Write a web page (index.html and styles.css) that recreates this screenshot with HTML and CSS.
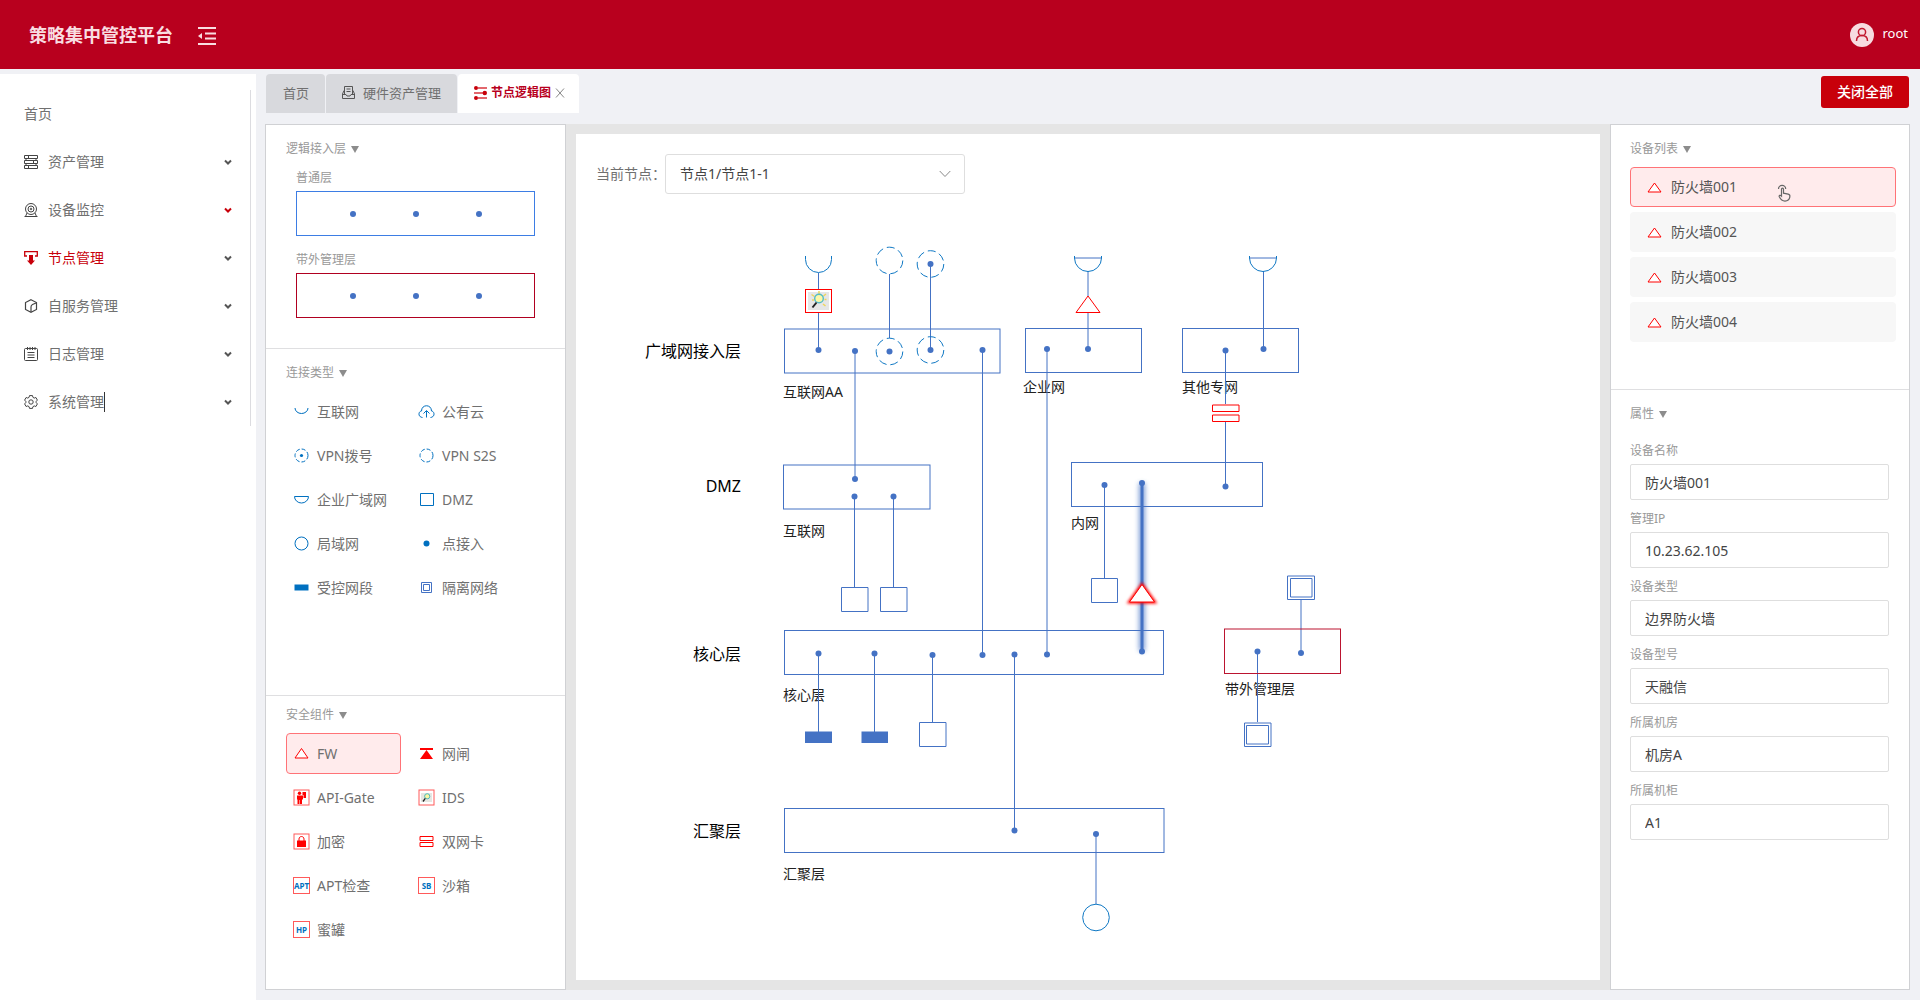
FILE: index.html
```html
<!DOCTYPE html>
<html lang="zh-CN">
<head>
<meta charset="utf-8">
<title>策略集中管控平台</title>
<link rel="stylesheet" href="styles.css">
</head>
<body>
<header class="topbar">
  <h1 class="brand">策略集中管控平台</h1>
  <button class="fold" type="button" aria-label="收起菜单">
    <svg width="20" height="20" viewBox="0 0 20 20" fill="none" stroke="currentColor" stroke-width="2"><path d="M1 2h18M8 7.500h11M8 12.500h11M1 18h18"/><path d="M1 10l4-3v6z" fill="currentColor" stroke="none"/></svg>
  </button>
  <div class="user">
    <svg width="24" height="24" viewBox="0 0 24 24"><circle cx="12" cy="12" r="12" fill="#f7dbe0"/><g fill="none" stroke="#c2182f" stroke-width="1.500"><circle cx="12" cy="9" r="3.600"/><path d="M6.500 18c0-3.500 2.200-5.400 5.500-5.400s5.500 1.900 5.500 5.400"/></g></svg>
    <span>root</span>
  </div>
</header>

<div class="shell">
  <aside class="sidebar">
    <nav class="menu">
      <a class="menu-item" href="#">首页</a>
      <a class="menu-item" href="#">
        <svg class="menu-icon" viewBox="0 0 14 14" fill="none" stroke="currentColor"><path d="M.5.500h13v3H.5zM.5 5.500h13v3H.5zM.5 10.500h13v3H.5zM4.500 .5v3M9.500 5.500v3M4.500 10.500v3M2 3.500v2M12 3.500v2M2 8.500v2M12 8.500v2"/></svg>
        <span>资产管理</span>
        <svg class="chev" viewBox="0 0 8 6"><path d="M1 1.500l3 3 3-3"/></svg>
      </a>
      <a class="menu-item" href="#">
        <svg class="menu-icon" viewBox="0 0 14 14" fill="none" stroke="currentColor"><circle cx="7" cy="6" r="5.500"/><circle cx="7" cy="6" r="3"/><circle cx="7" cy="6" r=".8"/><path d="M3 10L1.500 13.500h11L11 10M.5 13.500h13"/></svg>
        <span>设备监控</span>
        <svg class="chev chev-hot" viewBox="0 0 8 6"><path d="M1 1.500l3 3 3-3"/></svg>
      </a>
      <a class="menu-item active" href="#">
        <svg class="menu-icon" viewBox="0 0 14 14"><path d="M3 5H.7V.7h12.600V5H11" fill="none" stroke="currentColor" stroke-width="1.300"/><path d="M5 4h4v5.500h2L7 14 3 9.500h2z" fill="currentColor"/></svg>
        <span>节点管理</span>
        <svg class="chev" viewBox="0 0 8 6"><path d="M1 1.500l3 3 3-3"/></svg>
      </a>
      <a class="menu-item" href="#">
        <svg class="menu-icon" viewBox="0 0 14 14" fill="none" stroke="currentColor" stroke-width="1.200"><path d="M7 .7l5.500 2.800v7L7 13.300l-5.500-2.800v-7z"/><path d="M12 4L8.500 5.500Q7 6.200 7 8v5"/></svg>
        <span>自服务管理</span>
        <svg class="chev" viewBox="0 0 8 6"><path d="M1 1.500l3 3 3-3"/></svg>
      </a>
      <a class="menu-item" href="#">
        <svg class="menu-icon" viewBox="0 0 14 14" fill="none" stroke="currentColor"><rect x=".5" y="1.500" width="13" height="12" rx="1"/><path d="M3.500 0v3M6 0v3M8.500 0v3M11 0v3M3.500 5.500h7M3.500 8h7M3.500 10.500h7"/></svg>
        <span>日志管理</span>
        <svg class="chev" viewBox="0 0 8 6"><path d="M1 1.500l3 3 3-3"/></svg>
      </a>
      <a class="menu-item" href="#">
        <svg class="menu-icon" viewBox="0 0 14 14" fill="none" stroke="currentColor"><path d="M5.500.6h3l.4 1.700 1.300.8 1.700-.6 1.500 2.600-1.200 1.200v1.400l1.200 1.200-1.500 2.600-1.700-.6-1.300.8-.4 1.700h-3l-.4-1.700-1.300-.8-1.700.6L.6 8.900l1.200-1.200V6.300L.6 5.100l1.500-2.600 1.700.6 1.300-.8z"/><circle cx="7" cy="7" r="2.200"/></svg>
        <span class="typing">系统管理</span>
        <svg class="chev" viewBox="0 0 8 6"><path d="M1 1.500l3 3 3-3"/></svg>
      </a>
    </nav>
  </aside>

  <main class="main">
    <div class="tabbar">
      <div class="tabs">
        <button class="tab" type="button">首页</button>
        <button class="tab tab-icon" type="button">
          <svg width="13" height="13" viewBox="0 0 13 13" fill="none" stroke="#555"><path d="M2.500 8V.5h8V8M4.500 3h4M4.500 5.500h4"/><path d="M2 4.500L.5 8v4.500h12V8L11 4.500M.5 8.500h3.500l1 1.500h3l1-1.500h3.500"/></svg>
          硬件资产管理
        </button>
        <div class="tab tab-current">
          <svg width="13" height="14" viewBox="0 0 13 14"><path d="M4 2h9M0 7h9M4 12h9" stroke="#d9363e" stroke-width="1.400"/><g fill="#c8000a"><circle cx="2" cy="2" r="2"/><circle cx="10.800" cy="7" r="2.200"/><circle cx="2" cy="12" r="2"/></g></svg>
          <span>节点逻辑图</span>
          <button class="tab-close" type="button" aria-label="关闭"><svg width="10" height="12" viewBox="0 0 10 12" stroke="#888" fill="none"><path d="M1 1.500l8 9M9 1.500l-8 9"/></svg></button>
        </div>
      </div>
      <button class="close-all" type="button">关闭全部</button>
    </div>

    <div class="workspace">
      <section class="palette">
        <div class="group group-layers">
          <button class="group-title" type="button">逻辑接入层</button>
          <div class="layer-list">
            <div class="layer-name">普通层</div>
            <div class="layer-box"><i></i><i></i><i></i></div>
            <div class="layer-name">带外管理层</div>
            <div class="layer-box layer-oob"><i></i><i></i><i></i></div>
          </div>
        </div>
        <div class="group group-links">
          <button class="group-title" type="button">连接类型</button>
          <div class="tools">
            <button class="tool" type="button"><svg class="ico" viewBox="0 0 17 17"><path class="ln" d="M2 5a6.500 5.500 0 0 0 13 0"/></svg>互联网</button>
            <button class="tool" type="button"><svg class="ico" viewBox="0 0 17 17"><path class="ln" d="M4.500 14.500C-.3 14 .3 8.300 3.500 8 3.500 1 13.500 1 13.500 8c3.200.3 3.800 6-1 6.500M8.500 14.500V8M5.500 10.500L8.500 7.500l3 3"/></svg>公有云</button>
            <button class="tool" type="button"><svg class="ico" viewBox="0 0 17 17"><circle class="ln dash-s" cx="8.500" cy="8.500" r="6.500"/><circle class="dot" cx="8.500" cy="8.500" r="1.600"/></svg>VPN拨号</button>
            <button class="tool" type="button"><svg class="ico" viewBox="0 0 17 17"><circle class="ln dash-s" cx="8.500" cy="8.500" r="6.500"/></svg>VPN S2S</button>
            <button class="tool" type="button"><svg class="ico" viewBox="0 0 17 17"><path class="ln" d="M1.500 5.500h14a7 6.500 0 0 1-14 0z"/></svg>企业广域网</button>
            <button class="tool" type="button"><svg class="ico" viewBox="0 0 17 17"><path class="ln" d="M2.500 2.500h13v12h-13z"/></svg>DMZ</button>
            <button class="tool" type="button"><svg class="ico" viewBox="0 0 17 17"><circle class="ln" cx="8.500" cy="8.500" r="6.500"/></svg>局域网</button>
            <button class="tool" type="button"><svg class="ico" viewBox="0 0 17 17"><circle class="dot" cx="8.500" cy="8.500" r="3"/></svg>点接入</button>
            <button class="tool" type="button"><svg class="ico" viewBox="0 0 17 17"><path class="dot" d="M1.500 5.500h14v6h-14z"/></svg>受控网段</button>
            <button class="tool" type="button"><svg class="ico" viewBox="0 0 17 17"><path d="M3.500 3.500h10v10h-10zM5.500 5.500h6v6h-6z" fill="none" stroke="#4472c4"/></svg>隔离网络</button>
          </div>
        </div>
        <div class="group group-security">
          <button class="group-title" type="button">安全组件</button>
          <div class="tools">
            <button class="tool picked" type="button"><svg class="ico" viewBox="0 0 17 17"><path class="rd" d="M8.500 3.500l6.500 9.500H2z"/></svg>FW</button>
            <button class="tool" type="button"><svg class="ico" viewBox="0 0 17 17"><path d="M2 3h13v2H2zM8.500 5l6.500 9H2z" fill="#f00"/></svg>网闸</button>
            <button class="tool" type="button"><svg class="ico" viewBox="0 0 17 17"><rect class="frame" x="1" y="1" width="15" height="15"/><g fill="#f00"><circle cx="6.500" cy="4.300" r="1.700"/><path d="M4 6.500h6v4H9V15H7v-4h-.5v4h-2v-4.500H4zM9.500 3h3.500v6h-2.500V6h-1z"/></g></svg>API-Gate</button>
            <button class="tool" type="button"><svg class="ico" viewBox="0 0 17 17"><rect class="frame" x="1" y="1" width="15" height="15"/><path d="M3 4h11v9H3z" fill="#e6e6e2"/><circle cx="9.200" cy="7.300" r="2.600" fill="#fbf6a0" stroke="#4cb8bd"/><path d="M7.300 9.300L5 12.500" stroke="#222" stroke-width="1.300"/></svg>IDS</button>
            <button class="tool" type="button"><svg class="ico" viewBox="0 0 17 17"><rect class="frame" x="1" y="1" width="15" height="15"/><path d="M6 8V6c0-3.300 5-3.300 5 0v2" fill="none" stroke="#f00"/><path d="M4 7.500h9V14H4z" fill="#f00"/></svg>加密</button>
            <button class="tool" type="button"><svg class="ico" viewBox="0 0 17 17"><path class="rd" d="M2 3.500h13v4H2zM2 9.500h13v4H2z"/></svg>双网卡</button>
            <button class="tool" type="button"><span class="badge">APT</span>APT检查</button>
            <button class="tool" type="button"><span class="badge">SB</span>沙箱</button>
            <button class="tool" type="button"><span class="badge">HP</span>蜜罐</button>
          </div>
        </div>
      </section>

      <section class="stage">
        <div class="canvas">
          <div class="picker">
            <label for="node">当前节点：</label>
            <div class="select-wrap">
              <select id="node"><option>节点1/节点1-1</option></select>
              <svg width="12" height="8" viewBox="0 0 12 8"><path d="M.7 1l5.300 5.500L11.300 1" fill="none" stroke="#888"/></svg>
            </div>
          </div>
          <svg class="diagram" viewBox="576 194 1024 786" preserveAspectRatio="xMinYMin meet">
            <defs>
              <filter id="glow-blue" filterUnits="userSpaceOnUse" x="1120" y="470" width="44" height="200"><feGaussianBlur stdDeviation="2.500"/></filter>
              <filter id="glow-red" x="-50%" y="-50%" width="200%" height="200%"><feGaussianBlur stdDeviation="1.500"/></filter>
            </defs>
            <g class="zone-names">
              <text x="741" y="357">广域网接入层</text>
              <text x="741" y="492">DMZ</text>
              <text x="741" y="660">核心层</text>
              <text x="741" y="837">汇聚层</text>
            </g>
            <g class="captions">
              <text x="783" y="397">互联网AA</text>
              <text x="1023" y="392">企业网</text>
              <text x="1182" y="392">其他专网</text>
              <text x="783" y="536">互联网</text>
              <text x="1071" y="528">内网</text>
              <text x="783" y="700">核心层</text>
              <text x="1225" y="694">带外管理层</text>
              <text x="783" y="879">汇聚层</text>
            </g>
            <g class="shape">
              <rect x="784.500" y="329" width="215.500" height="44"/>
              <rect x="1025.500" y="328.500" width="116" height="44"/>
              <rect x="1182.500" y="328.500" width="116" height="44"/>
              <rect x="783.500" y="465" width="146.500" height="44"/>
              <rect x="1071.500" y="462.500" width="191" height="44"/>
              <rect x="784.500" y="630.500" width="379" height="44"/>
              <rect x="784.500" y="808.500" width="379.500" height="44"/>
              <path d="M818.500 273v16M818.500 313v37M889.500 274v64M930.500 264v86M855 351v128M982.500 350v305M1047 349v305M1088 271v25M1088 313v36M1263.500 271v78M1225.500 350v54M1225.500 422v64M854.500 496v91M893.500 496v91M1104.500 485v93M818.500 653v79M874.500 653v79M932.500 655v67M1014.500 654v176M1301 600v53M1257.500 651v71M1096 834v70"/>
              <path d="M841.500 587.500h26.500v24h-26.500zM880.500 587.500h26.500v24h-26.500zM1091.500 578.500h26v24h-26zM919.500 722.500h26.500v24h-26.500z"/>
              <path d="M1287.500 576h27v23.500h-27zM1290.500 578.500h21.500v18.500h-21.500zM1244.500 723h26.500v23.500h-26.500zM1246.500 725.500h22v18.500h-22z"/>
              <path d="M1074.500 258h27M1249.500 258h27"/>
            </g>
            <rect x="1224.500" y="629" width="116" height="44.500" fill="none" stroke="#bb1430"/>
            <path d="M805 731.500h27v11.500h-27zM861.500 731.500h26.500v11.500h-26.500z" fill="#4472c4"/>
            <g class="cloud">
              <path d="M805.500 256v3.500a13 13 0 0 0 26 0V256"/>
              <path d="M1074.500 256v2a13.500 13.500 0 0 0 27 0v-2M1249.500 256v2a13.500 13.500 0 0 0 27 0v-2"/>
              <circle cx="1096" cy="917.500" r="13.300"/>
              <g stroke-dasharray="8 3.900">
                <circle cx="889.500" cy="260.500" r="13.300"/><circle cx="930.500" cy="264" r="13.300"/>
                <circle cx="889.500" cy="351.500" r="13.300"/><circle cx="930.500" cy="350" r="13.300"/>
              </g>
            </g>
            <path d="M1142 483v168" stroke="#4472c4" stroke-width="6" filter="url(#glow-blue)" opacity=".7"/>
            <path d="M1142 483v168" stroke="#4472c4" stroke-width="3"/>
            <path d="M1142 584.500l12.500 17.500h-25z" fill="#f00" stroke="#f00" stroke-width="3" filter="url(#glow-red)"/>
            <g stroke="#f00" fill="#fff">
              <path d="M1142 584.500l12.500 17.500h-25z"/>
              <path d="M1088 296l12 16.500h-24z"/>
              <path d="M1212.500 405h26.500v6.500h-26.500zM1212.500 415h26.500v6.500h-26.500z"/>
              <rect x="805.500" y="289.500" width="26" height="23"/>
            </g>
            <g>
              <rect x="808" y="292" width="21" height="18" fill="#e6e6e6"/>
              <path d="M819 291v3M811.500 294.500l3 2M826 294l-2.500 2M826.500 299.500h-2M825.500 306l-2.500-2M812 300h2" stroke="#efd65a" stroke-width="1.500"/>
              <circle cx="819" cy="298.500" r="4.300" fill="#fbf7a8" stroke="#55bcc6" stroke-width="1.400"/>
              <path d="M816.500 302.500l-4 5" stroke="#222" stroke-width="2"/>
            </g>
            <g fill="#4472c4">
              <circle cx="818.500" cy="350" r="3"/><circle cx="855" cy="351" r="3"/><circle cx="889.500" cy="351.500" r="3"/><circle cx="930.500" cy="350" r="3"/><circle cx="930.500" cy="264" r="3"/><circle cx="982.500" cy="350" r="3"/>
              <circle cx="1047" cy="349" r="3"/><circle cx="1088" cy="349" r="3"/><circle cx="1225.500" cy="350.500" r="3"/><circle cx="1263.500" cy="349" r="3"/>
              <circle cx="855" cy="479" r="3"/><circle cx="854.500" cy="496.500" r="3"/><circle cx="893.500" cy="496.500" r="3"/>
              <circle cx="1104.500" cy="485" r="3"/><circle cx="1142" cy="483" r="3"/><circle cx="1225.500" cy="486.500" r="3"/>
              <circle cx="818.500" cy="653.500" r="3"/><circle cx="874.500" cy="653.500" r="3"/><circle cx="932.500" cy="655" r="3"/><circle cx="982.500" cy="655" r="3"/><circle cx="1014.500" cy="654.500" r="3"/><circle cx="1047" cy="654.500" r="3"/><circle cx="1142" cy="651.500" r="3"/>
              <circle cx="1257.500" cy="651.500" r="3"/><circle cx="1301" cy="653" r="3"/><circle cx="1014.500" cy="830.500" r="3"/><circle cx="1096" cy="834" r="3"/>
            </g>
          </svg>
        </div>
      </section>

      <section class="inspector">
        <div class="group group-devices">
          <button class="group-title" type="button">设备列表</button>
          <div class="devices">
            <button class="device picked" type="button"><svg class="ico" viewBox="0 0 17 17"><path class="rd" d="M8.500 4l6.500 9H2z"/></svg>防火墙001
              <svg class="hand" width="16" height="18" viewBox="0 0 16 18" fill="none" stroke="#666" stroke-width="1.200"><path d="M1.500 5a3.600 3.600 0 0 1 7.200 0"/><path d="M4.500 12V5.200c0-1.500 2-1.500 2 0v4l4.700 1c1.500.4 2 1.300 1.600 3-.5 2.400-1.800 3.900-4.800 3.900-2.600 0-4.500-1.800-5.700-4.300-.6-1.500 1-2 2.200-.8z"/></svg>
            </button>
            <button class="device" type="button"><svg class="ico" viewBox="0 0 17 17"><path class="rd" d="M8.500 4l6.500 9H2z"/></svg>防火墙002</button>
            <button class="device" type="button"><svg class="ico" viewBox="0 0 17 17"><path class="rd" d="M8.500 4l6.500 9H2z"/></svg>防火墙003</button>
            <button class="device" type="button"><svg class="ico" viewBox="0 0 17 17"><path class="rd" d="M8.500 4l6.500 9H2z"/></svg>防火墙004</button>
          </div>
        </div>
        <div class="group group-props">
          <button class="group-title" type="button">属性</button>
          <form class="props">
            <label for="p-name">设备名称</label><input id="p-name" type="text" value="防火墙001">
            <label for="p-ip">管理IP</label><input id="p-ip" type="text" value="10.23.62.105">
            <label for="p-type">设备类型</label><input id="p-type" type="text" value="边界防火墙">
            <label for="p-model">设备型号</label><input id="p-model" type="text" value="天融信">
            <label for="p-room">所属机房</label><input id="p-room" type="text" value="机房A">
            <label for="p-rack">所属机柜</label><input id="p-rack" type="text" value="A1">
          </form>
        </div>
      </section>
    </div>
  </main>
</div>
</body>
</html>
```
FILE: styles.css
```css
* { box-sizing: border-box; }

body {
  margin: 0;
  min-height: 100vh;
  display: flex;
  flex-direction: column;
  background: #f0f1f5;
  color: #707070;
  font: 14px/20px "Noto Sans", "Noto Sans CJK SC", sans-serif;
}

button, input, select { font: inherit; color: inherit; margin: 0; }
button { background: none; border: 0; padding: 0; cursor: pointer; text-align: left; }
a { color: inherit; text-decoration: none; }
svg { display: block; flex: none; }

/* Top bar */
.topbar {
  height: 69px;
  display: flex;
  align-items: center;
  padding: 0 12px 0 29px;
  background: #b8001e;
  color: #f9dde1;
}
.brand { margin: 0; font-size: 18px; line-height: 24px; font-weight: 700; }
.fold { margin: 2px 0 0 24px; color: #f9dde1; }
.user { margin-left: auto; display: flex; align-items: center; gap: 8px; color: #fff; font-size: 13px; line-height: 18px; }
.user span { padding-bottom: 4px; }

/* Side menu */
.shell { flex: 1; display: flex; margin-top: 5px; }
.sidebar { flex: none; width: 256px; padding-top: 16px; background: #fff; }
.menu { width: 251px; border-right: 1px solid #dcdce0; }
.menu-item { display: flex; align-items: center; gap: 10px; height: 48px; padding: 0 18px 0 24px; }
.menu-icon { width: 14px; height: 14px; color: #444; }
.active, .active .menu-icon { color: #c8000a; }
.typing { border-right: 1px solid #333; }
.chev { width: 8px; height: 6px; margin-left: auto; fill: none; stroke: #555; stroke-width: 2; }
.chev-hot { stroke: #c8000a; }

/* Tabs */
.main { flex: 1; min-width: 0; display: flex; flex-direction: column; padding: 0 10px 10px 9px; }
.tabbar { display: flex; justify-content: space-between; margin-bottom: 11px; padding: 0 1px; }
.tabs { display: flex; gap: 1px; }
.tab {
  display: flex;
  align-items: center;
  height: 39px;
  padding: 0 16px 2px 17px;
  border-radius: 4px 4px 0 0;
  background: #d8d9dd;
  font-size: 13px;
}
.tab-icon { gap: 8px; padding-left: 16px; }
.tab-current { gap: 4px; padding: 0 14px 2px 16px; background: #fff; color: #b8001e; font-size: 12px; font-weight: 700; }
.close-all {
  height: 32px;
  margin-top: 2px;
  padding: 0 16px;
  border-radius: 3px;
  background: #c8000a;
  color: #fff;
  font-weight: 500;
}

/* Workspace */
.workspace { flex: 1; display: flex; }
.palette, .inspector { flex: none; display: flex; flex-direction: column; background: #fff; border: 1px solid #d0d1d4; }
.palette { width: 301px; }
.inspector { width: 300px; }
.group { padding: 15px 20px 0; border-bottom: 1px solid #dfdfe1; }
.group:last-child { flex: 1; border-bottom: 0; }
.group-title { display: flex; align-items: center; gap: 5px; font-size: 12px; line-height: 18px; color: #999; }
.group-title::after {
  content: "";
  border: 4px solid transparent;
  border-top: 7px solid #8c8c8c;
  border-bottom: 0;
}

.group-layers { height: 224px; }
.layer-list { padding: 11px 10px 0; }
.layer-name { font-size: 12px; line-height: 18px; color: #999; margin-bottom: 4px; }
.layer-box {
  display: flex;
  justify-content: center;
  align-items: center;
  gap: 57px;
  height: 45px;
  margin-bottom: 15px;
  border: 1px solid #3d7de4;
}
.layer-box i { width: 6px; height: 6px; border-radius: 50%; background: #4472c4; }
.layer-oob { border-color: #b00020; }

.group-links { height: 347px; }
.palette .group-security { padding-top: 10px; }
.tools { display: grid; grid-template-columns: 115px 115px; gap: 3px 10px; padding-top: 9px; }
.tool {
  display: flex;
  align-items: center;
  gap: 7px;
  height: 41px;
  padding-left: 6px;
  border: 1px solid transparent;
  border-radius: 4px;
  white-space: nowrap;
}
.picked { background: #ffebec; border-color: #ff7377; }
.ico { width: 17px; height: 17px; }
.ln { fill: none; stroke: #0070c0; }
.dash-s { stroke-dasharray: 4 2; }
.dot { fill: #0070c0; }
.rd { fill: #fff; stroke: #f00; }
.frame { fill: #fff; stroke: #ff5a5a; }
.badge {
  display: flex;
  justify-content: center;
  align-items: center;
  width: 17px;
  height: 17px;
  border: 1px solid #ff5a5a;
  color: #0070c0;
  font-size: 8px;
  line-height: 10px;
  font-weight: 700;
}

/* Diagram canvas */
.stage { flex: 1; min-width: 0; padding: 10px; background: #e5e5e5; }
.canvas { height: 100%; background: #fff; }
.picker { display: flex; align-items: center; padding: 20px 20px 0; }
.picker label { width: 69px; white-space: nowrap; }
.select-wrap { position: relative; width: 300px; }
.select-wrap select {
  width: 100%;
  height: 40px;
  padding: 0 14px;
  appearance: none;
  background: #fff;
  border: 1px solid #dedede;
  border-radius: 3px;
  color: #444;
}
.select-wrap svg { position: absolute; right: 14px; top: 16px; pointer-events: none; }
.diagram { width: 100%; height: auto; }
.zone-names { font-size: 16px; fill: #000; text-anchor: end; }
.captions { font-size: 14px; fill: #222; }
.shape { fill: none; stroke: #4472c4; }
.cloud { fill: none; stroke: #0f78c4; }

/* Device list and properties */
.inspector .group { padding-left: 19px; }
.group-devices { height: 265px; padding-right: 13px; }
.devices { display: flex; flex-direction: column; gap: 5px; padding-top: 9px; }
.device {
  position: relative;
  display: flex;
  align-items: center;
  gap: 8px;
  height: 40px;
  padding-left: 15px;
  border: 1px solid transparent;
  border-radius: 4px;
  background: #f7f7f7;
  color: #555;
}
.device.picked { background: #ffebec; border-color: #ff7377; }
.hand { position: absolute; left: 146px; top: 16px; }
.props { display: flex; flex-direction: column; padding-top: 19px; }
.props label { margin-bottom: 4px; font-size: 12px; line-height: 18px; color: #999; }
.props input {
  width: 259px;
  height: 36px;
  margin-bottom: 10px;
  padding: 0 14px;
  border: 1px solid #dedede;
  border-radius: 2px;
  background: #fff;
  color: #444;
}
```
